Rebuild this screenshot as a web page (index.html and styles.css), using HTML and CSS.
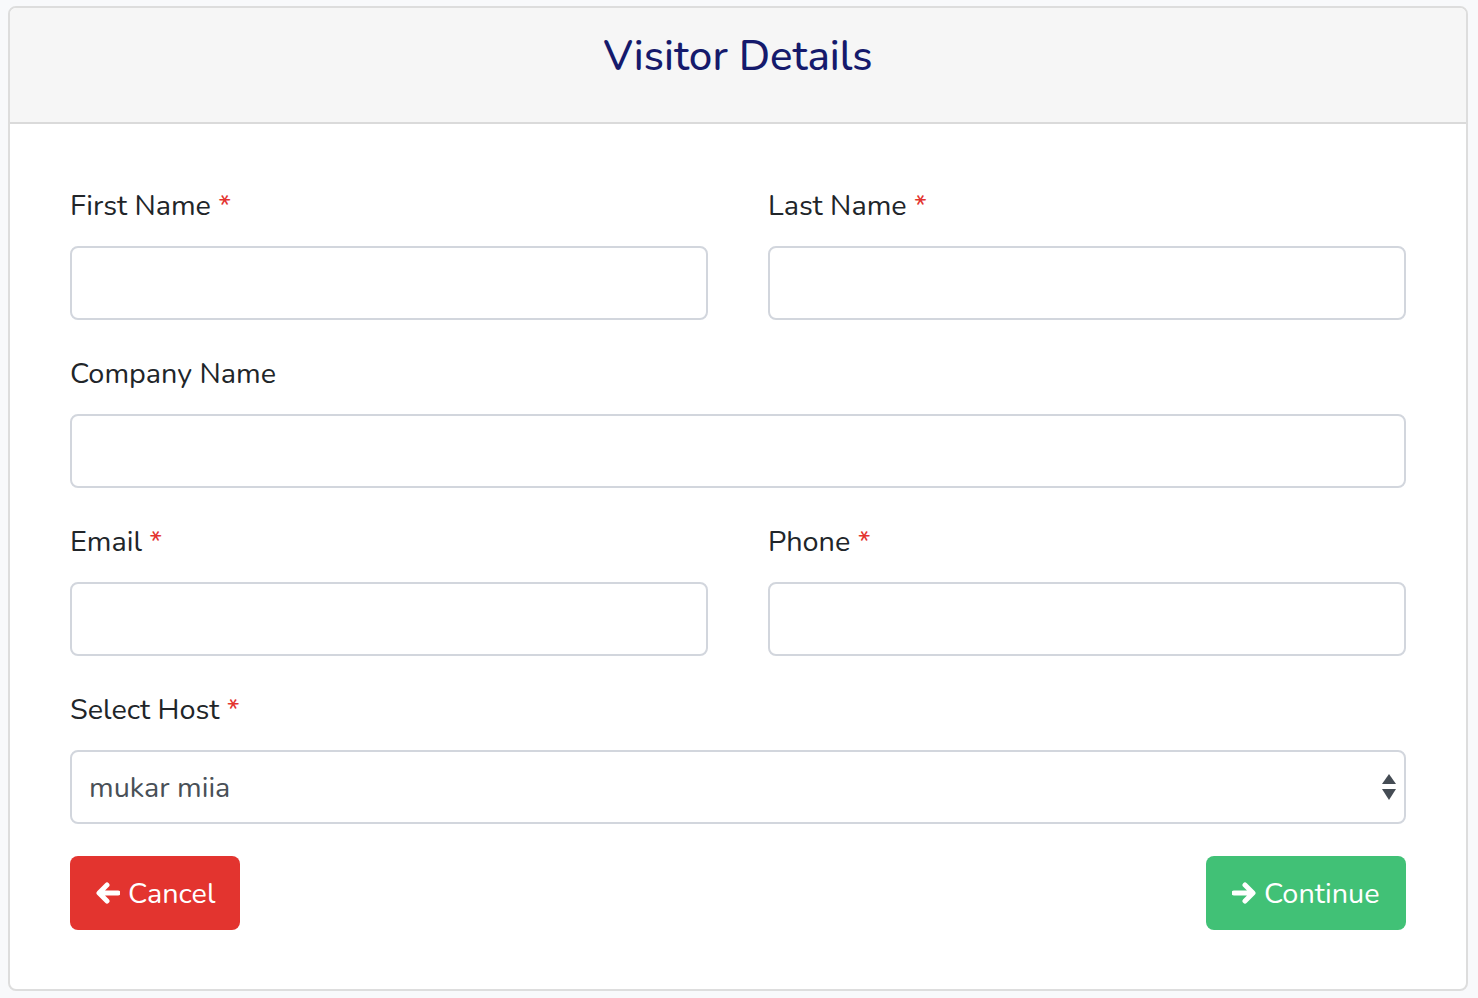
FILE: index.html
```html
<!DOCTYPE html>
<html lang="en">
<head>
<meta charset="utf-8">
<title>Visitor Details</title>
<link rel="stylesheet" href="styles.css">
</head>
<body>
<div class="card">
  <div class="card-header">
    <h1 class="title">Visitor Details</h1>
  </div>
  <form class="card-body">
    <div class="row">
      <div class="field">
        <label class="label">First Name <span class="req">*</span></label>
        <input class="input" type="text">
      </div>
      <div class="field">
        <label class="label">Last Name <span class="req">*</span></label>
        <input class="input" type="text">
      </div>
    </div>
    <div class="row">
      <div class="field">
        <label class="label">Company Name</label>
        <input class="input" type="text">
      </div>
    </div>
    <div class="row">
      <div class="field">
        <label class="label">Email <span class="req">*</span></label>
        <input class="input" type="text">
      </div>
      <div class="field">
        <label class="label">Phone <span class="req">*</span></label>
        <input class="input" type="text">
      </div>
    </div>
    <div class="row">
      <div class="field">
        <label class="label">Select Host <span class="req">*</span></label>
        <div class="select">
          <span class="select-value">mukar miia</span>
          <svg class="select-arrows" width="14" height="27" viewBox="0 0 14 27"><polygon points="7,0 14,10 0,10" fill="#454c54"/><polygon points="0,15 14,15 7,26" fill="#454c54"/></svg>
        </div>
      </div>
    </div>
    <div class="actions">
      <button type="button" class="btn btn-danger">
        <svg class="btn-icon" width="24" height="22" viewBox="0 0 24 22"><path d="M22 11H4M11 3L3 11L11 19" fill="none" stroke="#fff" stroke-width="5" stroke-linecap="round" stroke-linejoin="round"/></svg>
        Cancel
      </button>
      <button type="button" class="btn btn-success">
        <svg class="btn-icon" width="24" height="22" viewBox="0 0 24 22"><path d="M2 11H20M13 3L21 11L13 19" fill="none" stroke="#fff" stroke-width="5" stroke-linecap="round" stroke-linejoin="round"/></svg>
        Continue
      </button>
    </div>
  </form>
</div>
</body>
</html>
```
FILE: styles.css
```css
html, body {
  margin: 0;
  padding: 0;
}
body {
  background: #f8f9fb;
  font-family: "Nunito", "Lato", "Open Sans", sans-serif;
  color: #212529;
  padding: 6px 10px 6px 8px;
}
.card {
  background: #fff;
  border: 2px solid #dddddd;
  border-radius: 8px;
  overflow: hidden;
}
.card-header {
  background: #f6f6f6;
  border-bottom: 2px solid #dadada;
  height: 114px;
  display: flex;
  align-items: center;
  justify-content: center;
}
.title {
  margin: 0;
  font-size: 42px;
  font-weight: 500;
  color: #151a6c;
  line-height: 1;
  padding-bottom: 16px;
}
.card-body {
  padding: 61px 60px 59px 60px;
  display: flex;
  flex-direction: column;
}
.row {
  display: flex;
  gap: 60px;
  margin-bottom: 33px;
}
.row:nth-child(4) {
  margin-bottom: 32px;
}
.field {
  flex: 1;
  display: flex;
  flex-direction: column;
  min-width: 0;
}
.label {
  font-size: 28.8px;
  line-height: 42px;
  margin-bottom: 19px;
  color: #212529;
}
.req {
  color: #e3342f;
}
.input, .select {
  box-sizing: border-box;
  height: 74px;
  border: 2px solid #d2d6dd;
  border-radius: 8px;
  background: #fff;
  margin: 0;
  width: 100%;
  font-family: inherit;
}
.select {
  display: flex;
  align-items: center;
  justify-content: space-between;
  padding: 0 8px 0 17px;
}
.select-value {
  font-size: 28.8px;
  color: #495057;
}
.select-arrows {
  display: block;
}
.actions {
  display: flex;
  justify-content: space-between;
}
.btn {
  height: 74px;
  border: none;
  border-radius: 8px;
  color: #fff;
  font-family: inherit;
  font-size: 28.8px;
  display: flex;
  align-items: center;
  gap: 8px;
  padding: 0 20px 0 26px;
  cursor: pointer;
}
.btn-danger {
  background: #e3342f;
  width: 170px;
}
.btn-success {
  background: #41c176;
  width: 200px;
}
.btn-icon {
  display: block;
}
```
